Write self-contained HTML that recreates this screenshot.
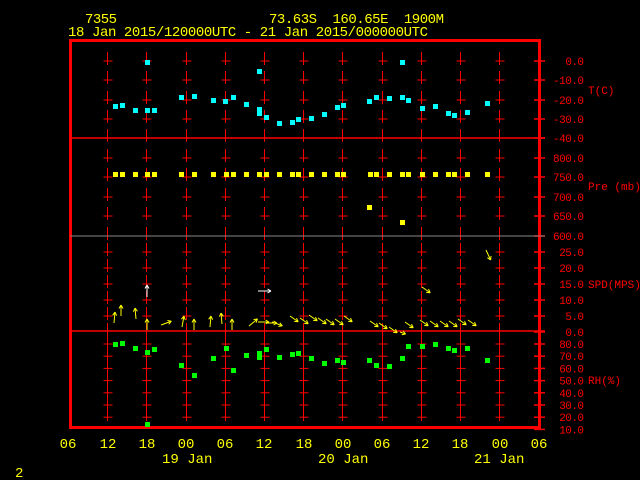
<!DOCTYPE html><html><head><style>body{margin:0;background:#000;width:640px;height:480px;overflow:hidden}svg{display:block}text{font-family:"Liberation Mono",monospace}</style></head><body>
<svg id="s" width="640" height="480" xmlns="http://www.w3.org/2000/svg">
<g fill="#ff0" font-size="14">
<text x="85" y="23" textLength="32">7355</text>
<text x="269" y="23" textLength="175" xml:space="preserve">73.63S  160.65E  1900M</text>
<text x="68" y="36" textLength="360">18 Jan 2015/120000UTC - 21 Jan 2015/000000UTC</text>
<g text-anchor="middle">
<text x="68" y="448">06</text><text x="108" y="448">12</text><text x="147" y="448">18</text><text x="186" y="448">00</text><text x="225" y="448">06</text><text x="264" y="448">12</text><text x="304" y="448">18</text><text x="343" y="448">00</text><text x="382" y="448">06</text><text x="421" y="448">12</text><text x="460" y="448">18</text><text x="500" y="448">00</text><text x="539" y="448">06</text></g>
<text x="162" y="463">19 Jan</text><text x="318" y="463">20 Jan</text><text x="474" y="463">21 Jan</text>
<text x="15" y="477">2</text>
</g>
<g id="grid"></g>
<rect x="70.5" y="40.5" width="469" height="387" fill="none" stroke="#f00" stroke-width="3"/>
<line x1="70" y1="138" x2="545" y2="138" stroke="#f00" stroke-width="1.5"/>
<line x1="70" y1="236" x2="545" y2="236" stroke="#888" stroke-width="1"/>
<line x1="70" y1="331" x2="545" y2="331" stroke="#f00" stroke-width="1.5"/>
<g id="lab" fill="#f00" font-size="11">
<text x="588" y="94">T(C)</text><text x="588" y="190">Pre (mb)</text><text x="588" y="288">SPD(MPS)</text><text x="588" y="384">RH(%)</text>
</g>
<g id="pts"></g>
</svg>
<script>
var NS="http://www.w3.org/2000/svg",g=document.getElementById('grid'),lab=document.getElementById('lab'),pts=document.getElementById('pts');
function el(t,a,p){var e=document.createElementNS(NS,t);for(var k in a)e.setAttribute(k,a[k]);(p||g).appendChild(e);return e;}
var ys=[],labs=[];
[["0.0",61],["-10.0",80],["-20.0",100],["-30.0",119],["-40.0",138]].forEach(function(a){ys.push(a[1]);labs.push(a)});
[["800.0",158],["750.0",177],["700.0",197],["650.0",216],["600.0",236]].forEach(function(a){ys.push(a[1]);labs.push(a)});
[["25.0",252],["20.0",268],["15.0",284],["10.0",300],["5.0",316],["0.0",332]].forEach(function(a){ys.push(a[1]);labs.push(a)});
[80,70,60,50,40,30,20,10].forEach(function(v,i){var y=344+i*12.2;ys.push(y);labs.push([v+".0",y])});
labs.forEach(function(a){el('text',{x:584,y:a[1]+4,'text-anchor':'end',textLength:a[0].length*6.2},lab).textContent=a[0];});
ys.forEach(function(y){el('line',{x1:534,y1:y,x2:545,y2:y,stroke:'#f00','stroke-width':1.5});});
var div=[138,236,332];
for(var i=1;i<12;i++){var x=Math.round(68+i*39.2)+0.5;
ys.forEach(function(y){if(y>425)return;
el('line',{x1:x,y1:y-9,x2:x,y2:Math.min(y+4,421),stroke:'#f00','stroke-width':1});
if(div.indexOf(y)<0)el('line',{x1:x-4,y1:y,x2:x+5,y2:y,stroke:'#f00','stroke-width':1});});}
function sq(l,c){l.forEach(function(p){el('rect',{x:p[0]-2,y:p[1]-2,width:5,height:5,fill:c},pts)})}
sq([[115,106],[122,105],[135,110],[147,62],[147,110],[154,110],[181,97],[194,96],[213,100],[225,101],[233,97],[246,104],[259,71],[259,109],[259,113],[266,117],[279,123],[292,122],[298,119],[311,118],[324,114],[337,107],[343,105],[369,101],[376,97],[389,98],[402,62],[402,97],[408,100],[422,108],[435,106],[448,113],[454,115],[467,112],[487,103]],'#0ff');
var py=[115,122,135,147,154,181,194,213,226,233,246,259,266,279,292,298,311,324,337,343,370,376,389,402,408,422,435,448,454,467,487];
sq(py.map(function(x){return [x,174]}).concat([[369,207],[402,222]]),'#ff0');
sq([[115,344],[122,343],[135,348],[147,352],[154,349],[181,365],[194,375],[213,358],[226,348],[233,370],[246,355],[259,353],[259,357],[266,349],[279,357],[292,354],[298,353],[311,358],[324,363],[337,360],[343,362],[369,360],[376,365],[389,366],[402,358],[408,346],[422,346],[435,344],[448,348],[454,350],[467,348],[487,360],[147,424]],'#0f0');
function ar(x,y,ang,len,c){var r=ang*Math.PI/180,dx=Math.cos(r),dy=-Math.sin(r);var x2=x+dx*len,y2=y+dy*len;
el('line',{x1:x,y1:y,x2:x2,y2:y2,stroke:c,'stroke-width':1},pts);
[150,-150].forEach(function(o){var rr=r+o*Math.PI/180;el('line',{x1:x2,y1:y2,x2:x2+Math.cos(rr)*4,y2:y2-Math.sin(rr)*4,stroke:c,'stroke-width':1},pts)});}
var Y='#ff0';
[[114,323,85],[121,316,90],[136,319,95],[147,330,90],[161,325,20],[182,327,80],[194,330,90],[210,327,85],[222,324,95],[232,330,90],[249,326,40],[258,322,0],[266,323,0],[272,322,-20]].forEach(function(a){ar(a[0],a[1],a[2],11,Y)});
[[290,316],[300,318],[309,315],[318,318],[326,319],[335,319],[344,316],[370,321],[379,323],[389,327],[405,322],[420,320],[430,321],[440,321],[449,321],[458,319],[468,320],[422,287]].forEach(function(a){ar(a[0],a[1],-35,10,Y)});
ar(486,250,-65,11,Y);ar(400,332,-20,6,Y);
ar(147,297,90,12,'#fff');ar(258,291,0,13,'#fff');
</script>
</body></html>
